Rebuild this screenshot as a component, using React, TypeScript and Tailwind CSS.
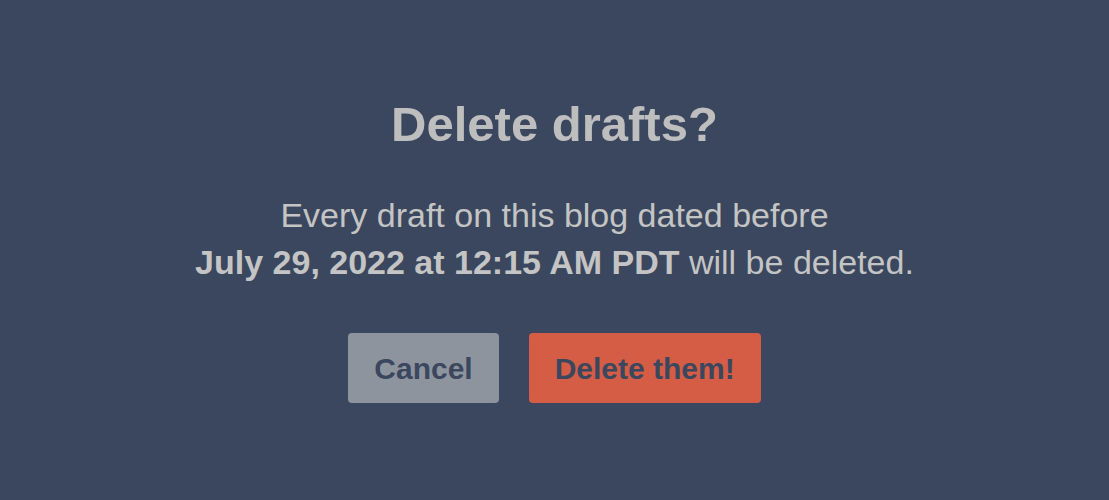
import React from 'react';

const App: React.FC = () => {
  return (
    <div className="h-[500px] w-full bg-[#3a475e] flex flex-col items-center pt-[100px] text-center" style={{ fontFamily: '"Liberation Sans", Arial, sans-serif' }}>
      <h1 className="text-[49px] leading-none font-bold text-[#bebebe] mb-[43px]">Delete drafts?</h1>
      <p className="text-[34px] leading-[47px] text-[#c4c4c4] mb-[47px]">
        Every draft on this blog dated before
        <br />
        <span className="font-bold">July 29, 2022 at 12:15 AM PDT</span> will be deleted.
      </p>
      <div className="flex gap-[30px]">
        <button className="h-[70px] px-[26px] rounded-[4px] bg-[#8e949e] text-[#3a475e] text-[30px] font-bold">
          Cancel
        </button>
        <button className="h-[70px] px-[26px] rounded-[4px] bg-[#d65d45] text-[#3a475e] text-[30px] font-bold">
          Delete them!
        </button>
      </div>
    </div>
  );
};

export default App;
